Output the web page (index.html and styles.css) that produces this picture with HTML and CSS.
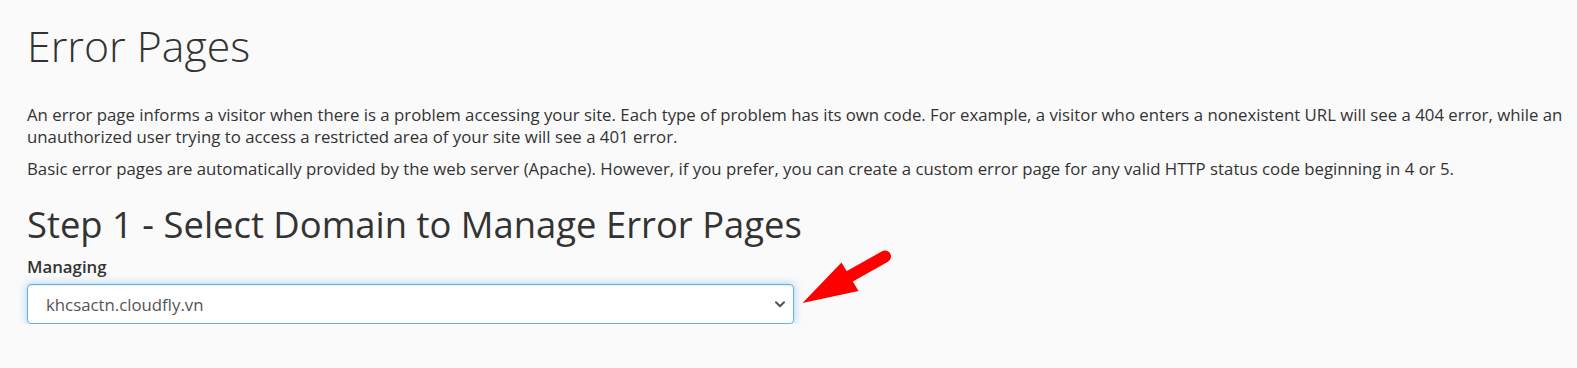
FILE: index.html
```html
<!DOCTYPE html>
<html lang="en">
<head>
<meta charset="utf-8">
<title>Error Pages</title>
<link rel="stylesheet" href="styles.css">
</head>
<body>
<div class="page">
  <h1 class="title">Error Pages</h1>
  <p class="desc">An error page informs a visitor when there is a problem accessing your site. Each type of problem has its own code. For example, a visitor who enters a nonexistent URL will see a 404 error, while an unauthorized user trying to access a restricted area of your site will see a 401 error.</p>
  <p class="desc">Basic error pages are automatically provided by the web server (Apache). However, if you prefer, you can create a custom error page for any valid HTTP status code beginning in 4 or 5.</p>
  <h2 class="step">Step 1 - Select Domain to Manage Error Pages</h2>
  <label class="label" for="domain">Managing</label>
  <div class="select-wrap">
    <select id="domain" class="select">
      <option>khcsactn.cloudfly.vn</option>
    </select>
    <svg class="chevron" width="10" height="7" viewBox="0 0 10 7"><path d="M1 1.2 L5 5.2 L9 1.2" fill="none" stroke="#555" stroke-width="2" stroke-linecap="round" stroke-linejoin="round"/></svg>
  </div>
</div>
<svg class="annot" width="1577" height="368" viewBox="0 0 1577 368">
  <line x1="885" y1="256.5" x2="845" y2="279" stroke="#ff0000" stroke-width="12" stroke-linecap="round"/>
  <polygon points="802.5,303 841.5,262.5 858.5,291" fill="#ff0000"/>
</svg>
</body>
</html>
```

FILE: styles.css
```css
html, body {
  margin: 0;
  padding: 0;
  background: #fafafa;
}
body {
  font-family: "Open Sans", "Liberation Sans", sans-serif;
  color: #333;
  font-size: 16.8px;
  line-height: 22px;
}
.page {
  padding: 23px 6px 0 27px;
  display: flex;
  flex-direction: column;
  align-items: flex-start;
}
.title {
  margin: 0 0 35px 0;
  font-size: 42.8px;
  font-weight: 300;
  line-height: 46px;
  color: #333;
}
.desc {
  margin: 0 0 10px 0;
  font-size: 16.8px;
  line-height: 22px;
}
.step {
  margin: 14px 0 12px 0;
  font-size: 36.4px;
  font-weight: 400;
  line-height: 40px;
  color: #333;
}
.label {
  font-weight: 600;
  font-size: 16.8px;
  line-height: 22px;
  margin-bottom: 6px;
}
.select-wrap {
  position: relative;
  width: 767px;
}
.select {
  appearance: none;
  -webkit-appearance: none;
  display: block;
  width: 767px;
  height: 40px;
  box-sizing: border-box;
  margin: 0;
  padding: 0 30px 0 18px;
  font-family: "Open Sans", "Liberation Sans", sans-serif;
  font-size: 16.8px;
  color: #555;
  background: #fff;
  border: 1px solid #66afe9;
  border-radius: 4px;
  box-shadow: inset 0 1px 1px rgba(0,0,0,.075), 0 0 8px rgba(102,175,233,.6);
  outline: none;
}
.chevron {
  position: absolute;
  right: 9px;
  top: 17px;
}
.annot {
  position: absolute;
  left: 0;
  top: 0;
  pointer-events: none;
}
```
